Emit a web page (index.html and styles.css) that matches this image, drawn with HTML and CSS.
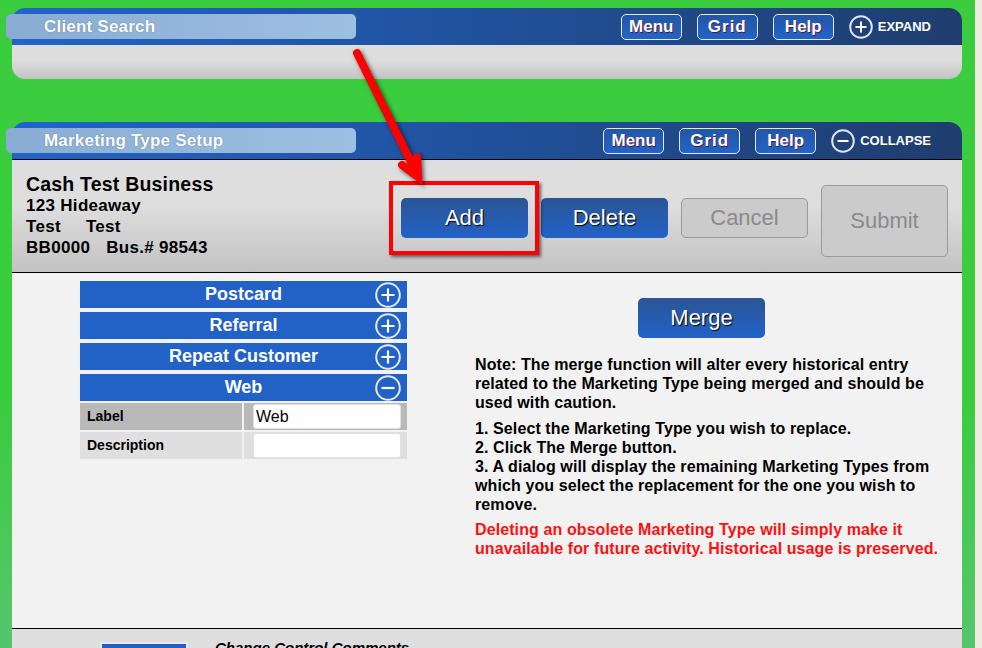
FILE: index.html
```html
<!DOCTYPE html>
<html lang="en">
<head>
  <meta charset="utf-8">
  <title>Marketing Type Setup</title>
  <link rel="stylesheet" href="styles.css">
</head>
<body>
<div class="page">

  <section class="panel">
    <header class="panel-head">
      <div class="panel-title">Client Search</div>
      <nav class="head-tools">
        <button class="tool-btn">Menu</button>
        <button class="tool-btn grid">Grid</button>
        <button class="tool-btn">Help</button>
        <span class="toggle">
          <svg width="24" height="24" viewBox="0 0 24 24"><circle cx="12" cy="12" r="10.8" fill="none" stroke="#dfe4ea" stroke-width="2"/><path d="M12 6.5v11M6.5 12h11" stroke="#fff" stroke-width="2"/></svg>
          EXPAND
        </span>
      </nav>
    </header>
    <div class="panel-body"></div>
  </section>

  <section class="panel">
    <header class="panel-head">
      <div class="panel-title">Marketing Type Setup</div>
      <nav class="head-tools">
        <button class="tool-btn">Menu</button>
        <button class="tool-btn grid">Grid</button>
        <button class="tool-btn">Help</button>
        <span class="toggle">
          <svg width="24" height="24" viewBox="0 0 24 24"><circle cx="12" cy="12" r="10.8" fill="none" stroke="#dfe4ea" stroke-width="2"/><path d="M6.5 12h11" stroke="#fff" stroke-width="2"/></svg>
          COLLAPSE
        </span>
      </nav>
    </header>

    <div class="client-bar">
      <div class="client-info">
        <div class="client-name">Cash Test Business</div>
        <div>123 Hideaway</div>
        <div><span class="sp-a">Test</span>Test</div>
        <div><span class="sp-b">BB0000</span>Bus.# 98543</div>
      </div>
      <div class="actions">
        <button class="act">Add</button>
        <button class="act">Delete</button>
        <button class="act off">Cancel</button>
        <button class="act off tall">Submit</button>
      </div>
    </div>

    <div class="setup-main">
      <div class="type-list">
        <div class="type-row"><span></span><span>Postcard</span>
          <svg width="26" height="26" viewBox="0 0 26 26"><circle cx="13" cy="13" r="11.8" fill="none" stroke="#e6e9ee" stroke-width="2"/><path d="M13 6.5v13M6.5 13h13" stroke="#fff" stroke-width="2.2"/></svg></div>
        <div class="type-row"><span></span><span>Referral</span>
          <svg width="26" height="26" viewBox="0 0 26 26"><circle cx="13" cy="13" r="11.8" fill="none" stroke="#e6e9ee" stroke-width="2"/><path d="M13 6.5v13M6.5 13h13" stroke="#fff" stroke-width="2.2"/></svg></div>
        <div class="type-row"><span></span><span>Repeat Customer</span>
          <svg width="26" height="26" viewBox="0 0 26 26"><circle cx="13" cy="13" r="11.8" fill="none" stroke="#e6e9ee" stroke-width="2"/><path d="M13 6.5v13M6.5 13h13" stroke="#fff" stroke-width="2.2"/></svg></div>
        <div class="type-row open"><span></span><span>Web</span>
          <svg width="26" height="26" viewBox="0 0 26 26"><circle cx="13" cy="13" r="11.8" fill="none" stroke="#e6e9ee" stroke-width="2"/><path d="M6.5 13h13" stroke="#fff" stroke-width="2.2"/></svg></div>

        <div class="field-row dark">
          <span class="field-label">Label</span>
          <span class="field-cell"><input type="text" value="Web"></span>
        </div>
        <div class="field-row">
          <span class="field-label">Description</span>
          <span class="field-cell"><input type="text" value=""></span>
        </div>
      </div>

      <div class="merge-col">
        <button class="act merge">Merge</button>
        <p>Note: The merge function will alter every historical entry related to the Marketing Type being merged and should be used with caution.</p>
        <p>1. Select the Marketing Type you wish to replace.<br>
           2. Click The Merge button.<br>
           3. A dialog will display the remaining Marketing Types from which you select the replacement for the one you wish to remove.</p>
        <p class="warn">Deleting an obsolete Marketing Type will simply make it unavailable for future activity. Historical usage is preserved.</p>
      </div>
    </div>

    <div class="panel-foot">
      <button class="foot-btn">Track</button>
      <span class="foot-label">Change Control Comments</span>
    </div>
  </section>

  <!-- screenshot callout -->
  <div class="callout-box"></div>
  <svg class="callout-arrow" width="460" height="200" viewBox="0 0 460 200">
    <line x1="357" y1="53" x2="416" y2="172" stroke="#ff0000" stroke-width="8" stroke-linecap="round"/>
    <polyline points="402,165 418,177 417,157" fill="none" stroke="#ff0000" stroke-width="8" stroke-linecap="round" stroke-linejoin="miter"/>
  </svg>
</div>
</body>
</html>
```

FILE: styles.css
```css
* {
    box-sizing: border-box;
}

body {
    margin: 0;
    background: #f0ece0;
    font-family: "Liberation Sans", Arial, sans-serif;
    overflow: hidden;
}

.page {
    position: relative;
    width: 975px;
    min-height: 648px;
    padding: 8px 0 0 12px;
    background: linear-gradient(#3bcc3f 60%, #58c571);
}

/* panels */
.panel {
    width: 950px;
}
.panel + .panel {
    margin-top: 43px;
}

.panel-head {
    height: 37px;
    display: flex;
    align-items: center;
    padding-right: 31px;
    border-radius: 13px 13px 0 0;
    background: linear-gradient(to right, #2264c8, #1f3d6e);
}

.panel-title {
    width: 350px;
    height: 25px;
    margin-left: -6px;
    padding-left: 38px;
    border-radius: 5px;
    background: linear-gradient(to right, #89acd3, #9dbfe2);
    color: #fff;
    font-size: 17px;
    font-weight: bold;
    letter-spacing: 0.2px;
    line-height: 25px;
    text-shadow: 0 0 1px #4a6a90;
}

.head-tools {
    margin-left: auto;
    display: flex;
    align-items: center;
    gap: 15px;
}

.tool-btn {
    width: 61px;
    height: 26px;
    padding: 0;
    border: 1px solid #e2eaf4;
    border-radius: 5px;
    background: linear-gradient(#2356a6, #2264c8);
    color: #fff;
    font: bold 17px "Liberation Sans", Arial, sans-serif;
    text-shadow: 1px 1px 0 #5c1232;
}
.tool-btn.grid {
    letter-spacing: 1px;
}

.toggle {
    display: flex;
    align-items: center;
    gap: 5px;
    color: #fff;
    font-size: 13px;
    font-weight: bold;
}
.toggle svg {
    display: block;
}

.panel-body {
    height: 34px;
    border-radius: 0 0 13px 13px;
    background: linear-gradient(#dddddd 45%, #c3c3c3);
}

/* client bar */
.client-bar {
    height: 114px;
    display: flex;
    justify-content: space-between;
    padding: 13px 14px 0 14px;
    border-top: 1px solid #000;
    border-bottom: 1px solid #000;
    background: linear-gradient(#dedede 40%, #c2c2c2);
}

.client-info {
    color: #000;
    font-size: 17px;
    font-weight: bold;
    letter-spacing: 0.3px;
    line-height: 21px;
}
.client-name {
    font-size: 19.5px;
    letter-spacing: 0.2px;
    line-height: 22px;
}
.sp-a {
    margin-right: 25px;
}
.sp-b {
    margin-right: 16px;
}

.actions {
    display: flex;
    align-items: flex-start;
    gap: 13px;
    margin-top: 12px;
}

.act {
    width: 127px;
    height: 40px;
    margin-top: 13px;
    padding: 0;
    border: none;
    border-radius: 5px;
    background: linear-gradient(#2b5594, #2262c8);
    color: #fff;
    font: 22px "Liberation Sans", Arial, sans-serif;
    text-shadow: 1px 1px 1px #000;
}
.act.off {
    border: 1px solid #9a9a9a;
    background: #cbcbcb;
    color: #8a8a8a;
    text-shadow: none;
}
.act.tall {
    height: 72px;
    margin-top: 0;
}

/* main area */
.setup-main {
    min-height: 356px;
    display: flex;
    gap: 68px;
    padding: 8px 0 0 68px;
    border-bottom: 1px solid #000;
    background: #f2f2f2;
}

.type-list {
    width: 327px;
}

.type-row {
    height: 27px;
    margin-bottom: 4px;
    display: grid;
    grid-template-columns: 32px 1fr 32px;
    align-items: center;
    background: #2262c6;
    color: #fff;
    font-size: 18px;
    font-weight: bold;
    text-align: center;
}
.type-row svg {
    justify-self: end;
    margin-right: 6px;
}
.type-row.open {
    margin-bottom: 2px;
}

.field-row {
    height: 27px;
    margin-bottom: 2px;
    display: grid;
    grid-template-columns: 162px 163px;
    gap: 2px;
}
.field-row > span {
    background: #dfdfdf;
}
.field-row.dark > span {
    background: #b9b9b9;
}

.field-label {
    padding-left: 7px;
    font-size: 14px;
    font-weight: bold;
    line-height: 27px;
}

.field-cell {
    padding: 1px 6px 0 9px;
}
.field-cell input {
    width: 148px;
    height: 25px;
    padding: 0 2px;
    border: 1px solid #e2e2e2;
    border-radius: 3px;
    background: #fff;
    font: 16px "Liberation Sans", Arial, sans-serif;
    color: #000;
}

.merge-col {
    width: 480px;
    padding-top: 17px;
}
.act.merge {
    margin: 0 0 0 163px;
}
.merge-col p {
    margin: 7px 0 0;
    color: #000;
    font-size: 16px;
    font-weight: bold;
    letter-spacing: 0.1px;
    line-height: 19px;
}
.merge-col .act + p {
    margin-top: 17px;
}
.merge-col p.warn {
    margin-top: 6px;
    color: #ff1010;
}

/* footer */
.panel-foot {
    height: 40px;
    display: flex;
    gap: 27px;
    padding: 13px 0 0 88px;
    background: #dedede;
}
.foot-btn {
    width: 88px;
    height: 26px;
    border: 2px solid #ececec;
    background: #2262c6;
    color: #fff;
    font: bold 15px "Liberation Sans", Arial, sans-serif;
}
.foot-label {
    margin-top: -3px;
    font-size: 15px;
    font-weight: bold;
    font-style: italic;
}

/* callout drawn over the screenshot */
.callout-box {
    position: absolute;
    left: 389px;
    top: 181px;
    width: 150px;
    height: 74px;
    border: 4px solid #ff0000;
    box-shadow: 2px 2px 3px rgba(0, 0, 0, 0.55);
}

.callout-arrow {
    position: absolute;
    left: 0;
    top: 0;
    pointer-events: none;
    filter: drop-shadow(2px 2px 2px rgba(0, 0, 0, 0.6));
}
```
